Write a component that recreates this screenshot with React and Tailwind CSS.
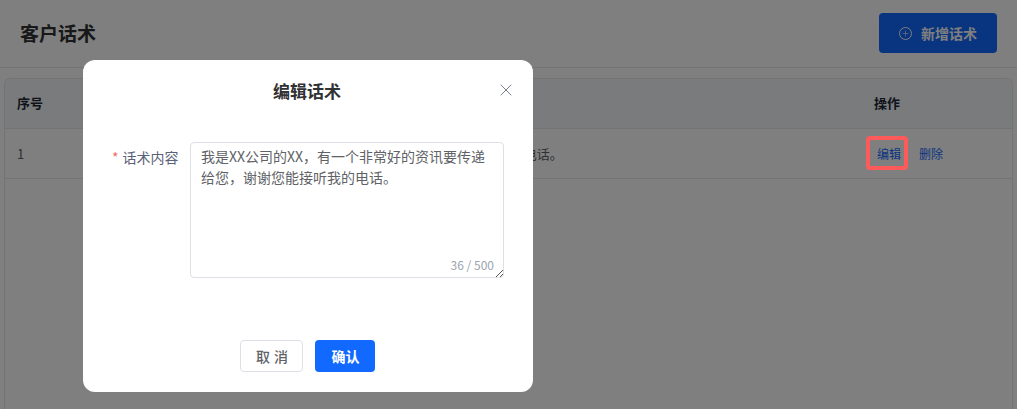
import { Plus, X } from "lucide-react";

const font = "font-['Noto_Sans_CJK_SC','Noto_Sans',sans-serif]";
const speech = "我是XX公司的XX，有一个非常好的资讯要传递给您，谢谢您能接听我的电话。";

function App() {
  return (
    <div className={`relative h-[409px] w-[1017px] overflow-hidden bg-white text-[#1f2937] ${font}`}>
      <header className="flex h-[68px] items-center justify-between border-b border-[#e5e7eb] pb-[1px] pl-5 pr-5">
        <h1 className="text-[19px] font-bold text-[#303133]">客户话术</h1>
        <button className="flex h-10 w-[118px] items-center justify-center gap-[9px] rounded bg-[#1269ff] text-sm font-bold text-white">
          <span className="flex h-[13px] w-[13px] items-center justify-center rounded-full border border-white">
            <Plus size={9} strokeWidth={1.5} />
          </span>
          新增话术
        </button>
      </header>

      <div className="mx-1 mt-2.5 h-[340px] rounded-t-md border-x border-t border-[#e5e7eb] text-[13px]">
        <div className="flex h-[50px] items-center rounded-t-md border-b border-[#e5e7eb] bg-[#f5f7fa] pb-[2px] font-bold text-[#1f2937]">
          <div className="w-[112px] pl-3">序号</div>
          <div className="flex-1">话术内容</div>
          <div className="w-[138px]">操作</div>
        </div>
        <div className="flex h-[50px] items-center border-b border-[#e5e7eb] text-[#606266]">
          <div className="w-[112px] pl-3">1</div>
          <div className="flex-1">{speech}</div>
          <div className="flex w-[138px] gap-[18px] pl-[3px] text-xs text-[#1269ff]">
            <span>编辑</span>
            <span>删除</span>
          </div>
        </div>
      </div>

      <div className="absolute inset-0 bg-black/50" />
      <div className="absolute left-[866px] top-[136px] h-[34px] w-[42px] rounded-sm border-4 border-[#ff5a5a]" />

      <div className="absolute left-[83px] top-[60px] flex h-[332px] w-[450px] flex-col rounded-xl bg-white">
        <div className="relative flex h-[62px] items-center justify-center pr-[2px]">
          <h2 className="text-[17px] font-bold text-[#303133]">编辑话术</h2>
          <X size={20} strokeWidth={1.1} className="absolute right-[17px] top-5 text-[#6b7280]" />
        </div>
        <div className="mt-5 flex pl-[29px]">
          <label className="w-[78px] pt-[5px] text-sm text-[#5a6178]">
            <span className="mr-1 text-[#f56c6c]">*</span>话术内容
          </label>
          <div className="relative h-[136px] w-[314px] rounded border border-[#dcdfe6] px-2.5 py-[3px] text-sm leading-[21px] text-[#606266]">
            {speech}
            <span className="absolute bottom-1 right-[9px] text-xs text-[#9ca3af]">36 / 500</span>
            <svg className="absolute bottom-0 right-0" width="8" height="8" viewBox="0 0 8 8">
              <path d="M1 8 8 1M5 8 8 5" stroke="#555" strokeWidth="1" fill="none" />
            </svg>
          </div>
        </div>
        <div className="mt-[62px] flex justify-center gap-3 pr-[2px]">
          <button className="h-8 w-[63px] rounded border border-[#dcdfe6] pl-[6px] text-sm font-medium tracking-[4px] text-[#606266]">取消</button>
          <button className="h-8 w-[60px] rounded bg-[#1269ff] pl-[2px] text-sm font-bold text-white">确认</button>
        </div>
      </div>
    </div>
  );
}

export default App;
